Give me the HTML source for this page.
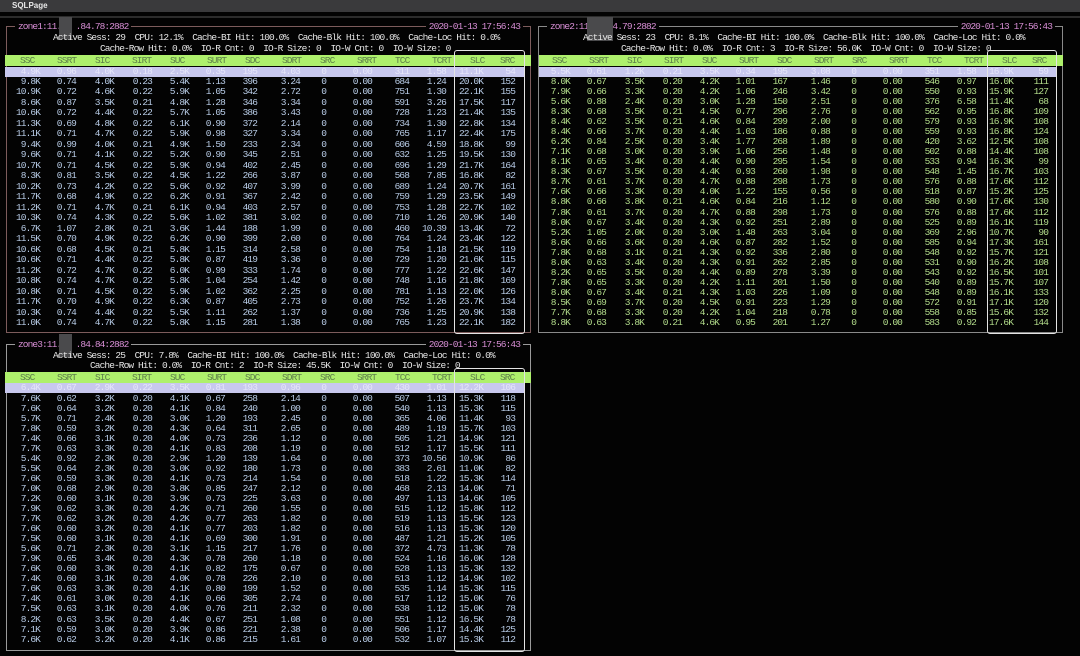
<!DOCTYPE html>
<html><head><meta charset="utf-8">
<style>
*{margin:0;padding:0;box-sizing:border-box}
body{width:1080px;height:656px;background:#030303;position:relative;overflow:hidden;font-family:"Liberation Mono",monospace;font-size:9.5px;letter-spacing:-0.9px}
.top{position:absolute;left:0;top:0;width:1080px;height:12px;background:#3a3a3c}
.top span{position:absolute;left:12px;top:0;font:bold 8px "Liberation Sans",sans-serif;color:#e8e8e8;letter-spacing:0;line-height:12px}
.rule{position:absolute;left:0;top:16px;width:1080px;height:2px;background:#2c2c2c}
.box{position:absolute;border:1px solid #888}
.ttl{position:absolute;top:-6px;background:#030303;color:#d98fd6;line-height:11px;padding:0 3px}
.info{position:absolute;color:#e6e6e6;white-space:pre;line-height:11px}
.green{position:absolute;height:11px;background:#aef06c}
.lav{position:absolute;height:10px;background:#c8c8ee}
.hd{position:absolute;color:#5d7f4a;line-height:11px}
.wb{position:absolute;border:1.5px solid #e4e4e4;border-radius:3px}
.blur{position:absolute;background:#4a4a4c}
table{position:absolute;border-collapse:collapse;table-layout:fixed}
td{text-align:right;padding:0;white-space:nowrap;overflow:visible}
.z1 td{height:10.5px;line-height:10.5px;color:#b9cde8}
.z2 td{height:10.08px;line-height:10.08px;color:#b4de8c}
.z3 td{height:10.04px;line-height:10.04px;color:#b9cde8}
.lt td{color:#e6e6fa;height:10px;line-height:10px}
</style></head><body>
<div class="top"><span>SQLPage</span></div>
<div class="rule"></div>

<!-- ZONE 1 -->
<div class="box" style="left:6px;top:26px;width:525px;height:307px;border-color:#7d5c5c">
<div class="ttl" style="left:8px">zone1:11.&nbsp;&nbsp;&nbsp;.84.78:2882</div>
<div class="ttl" style="right:7px">2020-01-13 17:56:43</div>
</div>
<div class="blur" style="left:59px;top:17px;width:13px;height:22px"></div>
<div class="info" style="left:53px;top:32px">Active Sess: 29  CPU: 12.1%  Cache-BI Hit: 100.0%  Cache-Blk Hit: 100.0%  Cache-Loc Hit: 0.0%</div>
<div class="info" style="left:100px;top:43px">Cache-Row Hit: 0.0%  IO-R Cnt: 0  IO-R Size: 0  IO-W Cnt: 0  IO-W Size: 0</div>
<div class="green" style="left:5px;top:55px;width:526px"></div>
<div class="lav" style="left:5px;top:67px;width:520px"></div>
<div class="hd" style="top:55px;left:20px">SSC</div><div class="hd" style="top:55px;left:57px">SSRT</div><div class="hd" style="top:55px;left:95px">SIC</div><div class="hd" style="top:55px;left:132px">SIRT</div><div class="hd" style="top:55px;left:170px">SUC</div><div class="hd" style="top:55px;left:207px">SURT</div><div class="hd" style="top:55px;left:245px">SDC</div><div class="hd" style="top:55px;left:282px">SDRT</div><div class="hd" style="top:55px;left:320px">SRC</div><div class="hd" style="top:55px;left:357px">SRRT</div><div class="hd" style="top:55px;left:395px">TCC</div><div class="hd" style="top:55px;left:432px">TCRT</div><div class="hd" style="top:55px;left:470px">SLC</div><div class="hd" style="top:55px;left:500px">SRC</div>
<table class="lt" style="left:0;top:67px;width:515px"><colgroup><col style="width:40px"><col style="width:36px"><col style="width:38px"><col style="width:38px"><col style="width:37px"><col style="width:36px"><col style="width:32px"><col style="width:43px"><col style="width:26px"><col style="width:46px"><col style="width:37px"><col style="width:37px"><col style="width:37px"><col style="width:32px"></colgroup>
<tr><td>4.9K</td><td>0.96</td><td>4.0K</td><td>0.18</td><td>2.5K</td><td>0.35</td><td>195</td><td>4.03</td><td>0</td><td>0.00</td><td>311</td><td>1.58</td><td>11.1K</td><td>54</td></tr></table>
<table class="z1" style="left:0;top:76.5px;width:515px"><colgroup><col style="width:40px"><col style="width:36px"><col style="width:38px"><col style="width:38px"><col style="width:37px"><col style="width:36px"><col style="width:32px"><col style="width:43px"><col style="width:26px"><col style="width:46px"><col style="width:37px"><col style="width:37px"><col style="width:37px"><col style="width:32px"></colgroup>
<tr><td>9.8K</td><td>0.74</td><td>4.0K</td><td>0.23</td><td>5.4K</td><td>1.13</td><td>396</td><td>3.24</td><td>0</td><td>0.00</td><td>684</td><td>1.24</td><td>20.0K</td><td>152</td></tr>
<tr><td>10.9K</td><td>0.72</td><td>4.6K</td><td>0.22</td><td>5.9K</td><td>1.05</td><td>342</td><td>2.72</td><td>0</td><td>0.00</td><td>751</td><td>1.30</td><td>22.1K</td><td>155</td></tr>
<tr><td>8.6K</td><td>0.87</td><td>3.5K</td><td>0.21</td><td>4.8K</td><td>1.28</td><td>346</td><td>3.34</td><td>0</td><td>0.00</td><td>591</td><td>3.26</td><td>17.5K</td><td>117</td></tr>
<tr><td>10.6K</td><td>0.72</td><td>4.4K</td><td>0.22</td><td>5.7K</td><td>1.05</td><td>386</td><td>3.43</td><td>0</td><td>0.00</td><td>728</td><td>1.23</td><td>21.4K</td><td>135</td></tr>
<tr><td>11.3K</td><td>0.69</td><td>4.8K</td><td>0.22</td><td>6.1K</td><td>0.90</td><td>372</td><td>2.14</td><td>0</td><td>0.00</td><td>734</td><td>1.30</td><td>22.8K</td><td>134</td></tr>
<tr><td>11.1K</td><td>0.71</td><td>4.7K</td><td>0.22</td><td>5.9K</td><td>0.98</td><td>327</td><td>3.34</td><td>0</td><td>0.00</td><td>765</td><td>1.17</td><td>22.4K</td><td>175</td></tr>
<tr><td>9.4K</td><td>0.99</td><td>4.0K</td><td>0.21</td><td>4.9K</td><td>1.50</td><td>233</td><td>2.34</td><td>0</td><td>0.00</td><td>606</td><td>4.59</td><td>18.8K</td><td>99</td></tr>
<tr><td>9.6K</td><td>0.71</td><td>4.1K</td><td>0.22</td><td>5.2K</td><td>0.90</td><td>345</td><td>2.51</td><td>0</td><td>0.00</td><td>632</td><td>1.25</td><td>19.5K</td><td>130</td></tr>
<tr><td>10.7K</td><td>0.71</td><td>4.5K</td><td>0.22</td><td>5.9K</td><td>0.94</td><td>402</td><td>2.45</td><td>0</td><td>0.00</td><td>696</td><td>1.29</td><td>21.7K</td><td>164</td></tr>
<tr><td>8.3K</td><td>0.81</td><td>3.5K</td><td>0.22</td><td>4.5K</td><td>1.22</td><td>266</td><td>3.87</td><td>0</td><td>0.00</td><td>568</td><td>7.85</td><td>16.8K</td><td>82</td></tr>
<tr><td>10.2K</td><td>0.73</td><td>4.2K</td><td>0.22</td><td>5.6K</td><td>0.92</td><td>407</td><td>3.99</td><td>0</td><td>0.00</td><td>689</td><td>1.24</td><td>20.7K</td><td>161</td></tr>
<tr><td>11.7K</td><td>0.68</td><td>4.9K</td><td>0.22</td><td>6.2K</td><td>0.91</td><td>367</td><td>2.42</td><td>0</td><td>0.00</td><td>759</td><td>1.29</td><td>23.5K</td><td>149</td></tr>
<tr><td>11.2K</td><td>0.71</td><td>4.7K</td><td>0.21</td><td>6.1K</td><td>0.94</td><td>403</td><td>2.57</td><td>0</td><td>0.00</td><td>753</td><td>1.28</td><td>22.7K</td><td>102</td></tr>
<tr><td>10.3K</td><td>0.74</td><td>4.3K</td><td>0.22</td><td>5.6K</td><td>1.02</td><td>381</td><td>3.02</td><td>0</td><td>0.00</td><td>710</td><td>1.26</td><td>20.9K</td><td>140</td></tr>
<tr><td>6.7K</td><td>1.07</td><td>2.8K</td><td>0.21</td><td>3.6K</td><td>1.44</td><td>188</td><td>1.99</td><td>0</td><td>0.00</td><td>460</td><td>10.39</td><td>13.4K</td><td>72</td></tr>
<tr><td>11.5K</td><td>0.70</td><td>4.9K</td><td>0.22</td><td>6.2K</td><td>0.90</td><td>399</td><td>2.60</td><td>0</td><td>0.00</td><td>764</td><td>1.24</td><td>23.4K</td><td>122</td></tr>
<tr><td>10.6K</td><td>0.68</td><td>4.5K</td><td>0.21</td><td>5.8K</td><td>1.15</td><td>314</td><td>2.58</td><td>0</td><td>0.00</td><td>754</td><td>1.18</td><td>21.5K</td><td>119</td></tr>
<tr><td>10.6K</td><td>0.71</td><td>4.4K</td><td>0.22</td><td>5.8K</td><td>0.87</td><td>419</td><td>3.36</td><td>0</td><td>0.00</td><td>729</td><td>1.20</td><td>21.6K</td><td>115</td></tr>
<tr><td>11.2K</td><td>0.72</td><td>4.7K</td><td>0.22</td><td>6.0K</td><td>0.99</td><td>333</td><td>1.74</td><td>0</td><td>0.00</td><td>777</td><td>1.22</td><td>22.6K</td><td>147</td></tr>
<tr><td>10.8K</td><td>0.74</td><td>4.7K</td><td>0.22</td><td>5.8K</td><td>1.04</td><td>254</td><td>1.42</td><td>0</td><td>0.00</td><td>748</td><td>1.16</td><td>21.8K</td><td>169</td></tr>
<tr><td>10.8K</td><td>0.71</td><td>4.5K</td><td>0.22</td><td>5.9K</td><td>1.02</td><td>362</td><td>2.25</td><td>0</td><td>0.00</td><td>781</td><td>1.13</td><td>22.0K</td><td>126</td></tr>
<tr><td>11.7K</td><td>0.70</td><td>4.9K</td><td>0.22</td><td>6.3K</td><td>0.87</td><td>405</td><td>2.73</td><td>0</td><td>0.00</td><td>752</td><td>1.26</td><td>23.7K</td><td>134</td></tr>
<tr><td>10.3K</td><td>0.74</td><td>4.4K</td><td>0.22</td><td>5.5K</td><td>1.11</td><td>262</td><td>1.37</td><td>0</td><td>0.00</td><td>736</td><td>1.25</td><td>20.9K</td><td>138</td></tr>
<tr><td>11.0K</td><td>0.74</td><td>4.7K</td><td>0.22</td><td>5.8K</td><td>1.15</td><td>281</td><td>1.38</td><td>0</td><td>0.00</td><td>765</td><td>1.23</td><td>22.1K</td><td>182</td></tr>
</table>
<div class="wb" style="left:454px;top:50px;width:71px;height:284px"></div>

<!-- ZONE 2 -->
<div class="box" style="left:538px;top:26px;width:525px;height:307px;border-color:#8a8a8a">
<div class="ttl" style="left:8px">zone2:11.&nbsp;&nbsp;&nbsp;&nbsp;4.79:2882</div>
<div class="ttl" style="right:7px">2020-01-13 17:56:43</div>
</div>
<div class="blur" style="left:587px;top:17px;width:26px;height:24px"></div>
<div class="info" style="left:583px;top:32px">Active Sess: 23  CPU: 8.1%  Cache-BI Hit: 100.0%  Cache-Blk Hit: 100.0%  Cache-Loc Hit: 0.0%</div>
<div class="info" style="left:621px;top:43px">Cache-Row Hit: 0.0%  IO-R Cnt: 3  IO-R Size: 56.0K  IO-W Cnt: 0  IO-W Size: 0</div>
<div class="green" style="left:539px;top:55px;width:524px"></div>
<div class="lav" style="left:539px;top:67px;width:517px"></div>
<div class="hd" style="top:55px;left:552px">SSC</div><div class="hd" style="top:55px;left:589px">SSRT</div><div class="hd" style="top:55px;left:627px">SIC</div><div class="hd" style="top:55px;left:664px">SIRT</div><div class="hd" style="top:55px;left:702px">SUC</div><div class="hd" style="top:55px;left:739px">SURT</div><div class="hd" style="top:55px;left:777px">SDC</div><div class="hd" style="top:55px;left:814px">SDRT</div><div class="hd" style="top:55px;left:852px">SRC</div><div class="hd" style="top:55px;left:889px">SRRT</div><div class="hd" style="top:55px;left:927px">TCC</div><div class="hd" style="top:55px;left:964px">TCRT</div><div class="hd" style="top:55px;left:1002px">SLC</div><div class="hd" style="top:55px;left:1032px">SRC</div>
<table class="lt" style="left:530px;top:67px;width:518px"><colgroup><col style="width:40px"><col style="width:36px"><col style="width:38px"><col style="width:38px"><col style="width:37px"><col style="width:36px"><col style="width:32px"><col style="width:43px"><col style="width:26px"><col style="width:46px"><col style="width:37px"><col style="width:37px"><col style="width:37px"><col style="width:35px"></colgroup>
<tr><td>5.5K</td><td>0.61</td><td>1.2K</td><td>0.21</td><td>3.5K</td><td>0.34</td><td>195</td><td>3.08</td><td>0</td><td>0.00</td><td>351</td><td>1.58</td><td>16.9K</td><td>59</td></tr></table>
<table class="z2" style="left:530px;top:76.5px;width:518px"><colgroup><col style="width:40px"><col style="width:36px"><col style="width:38px"><col style="width:38px"><col style="width:37px"><col style="width:36px"><col style="width:32px"><col style="width:43px"><col style="width:26px"><col style="width:46px"><col style="width:37px"><col style="width:37px"><col style="width:37px"><col style="width:35px"></colgroup>
<tr><td>8.0K</td><td>0.67</td><td>3.5K</td><td>0.20</td><td>4.2K</td><td>1.01</td><td>167</td><td>1.46</td><td>0</td><td>0.00</td><td>546</td><td>0.97</td><td>16.0K</td><td>111</td></tr>
<tr><td>7.9K</td><td>0.66</td><td>3.3K</td><td>0.20</td><td>4.2K</td><td>1.06</td><td>246</td><td>3.42</td><td>0</td><td>0.00</td><td>550</td><td>0.93</td><td>15.9K</td><td>127</td></tr>
<tr><td>5.6K</td><td>0.88</td><td>2.4K</td><td>0.20</td><td>3.0K</td><td>1.28</td><td>150</td><td>2.51</td><td>0</td><td>0.00</td><td>376</td><td>6.58</td><td>11.4K</td><td>68</td></tr>
<tr><td>8.3K</td><td>0.68</td><td>3.5K</td><td>0.21</td><td>4.5K</td><td>0.77</td><td>296</td><td>2.76</td><td>0</td><td>0.00</td><td>562</td><td>0.95</td><td>16.8K</td><td>109</td></tr>
<tr><td>8.4K</td><td>0.62</td><td>3.5K</td><td>0.21</td><td>4.6K</td><td>0.84</td><td>299</td><td>2.00</td><td>0</td><td>0.00</td><td>579</td><td>0.93</td><td>16.9K</td><td>108</td></tr>
<tr><td>8.4K</td><td>0.66</td><td>3.7K</td><td>0.20</td><td>4.4K</td><td>1.03</td><td>186</td><td>0.88</td><td>0</td><td>0.00</td><td>559</td><td>0.93</td><td>16.8K</td><td>124</td></tr>
<tr><td>6.2K</td><td>0.84</td><td>2.5K</td><td>0.20</td><td>3.4K</td><td>1.77</td><td>268</td><td>1.89</td><td>0</td><td>0.00</td><td>420</td><td>3.62</td><td>12.5K</td><td>108</td></tr>
<tr><td>7.1K</td><td>0.68</td><td>3.0K</td><td>0.20</td><td>3.9K</td><td>1.06</td><td>256</td><td>1.48</td><td>0</td><td>0.00</td><td>502</td><td>0.88</td><td>14.4K</td><td>108</td></tr>
<tr><td>8.1K</td><td>0.65</td><td>3.4K</td><td>0.20</td><td>4.4K</td><td>0.90</td><td>295</td><td>1.54</td><td>0</td><td>0.00</td><td>533</td><td>0.94</td><td>16.3K</td><td>99</td></tr>
<tr><td>8.3K</td><td>0.67</td><td>3.5K</td><td>0.20</td><td>4.4K</td><td>0.93</td><td>260</td><td>1.98</td><td>0</td><td>0.00</td><td>548</td><td>1.45</td><td>16.7K</td><td>103</td></tr>
<tr><td>8.7K</td><td>0.61</td><td>3.7K</td><td>0.20</td><td>4.7K</td><td>0.88</td><td>298</td><td>1.73</td><td>0</td><td>0.00</td><td>576</td><td>0.88</td><td>17.6K</td><td>112</td></tr>
<tr><td>7.6K</td><td>0.66</td><td>3.3K</td><td>0.20</td><td>4.0K</td><td>1.22</td><td>155</td><td>0.56</td><td>0</td><td>0.00</td><td>518</td><td>0.87</td><td>15.2K</td><td>125</td></tr>
<tr><td>8.8K</td><td>0.66</td><td>3.8K</td><td>0.21</td><td>4.6K</td><td>0.84</td><td>216</td><td>1.12</td><td>0</td><td>0.00</td><td>580</td><td>0.90</td><td>17.6K</td><td>130</td></tr>
<tr><td>7.8K</td><td>0.61</td><td>3.7K</td><td>0.20</td><td>4.7K</td><td>0.88</td><td>298</td><td>1.73</td><td>0</td><td>0.00</td><td>576</td><td>0.88</td><td>17.6K</td><td>112</td></tr>
<tr><td>8.0K</td><td>0.67</td><td>3.4K</td><td>0.20</td><td>4.3K</td><td>0.92</td><td>251</td><td>2.89</td><td>0</td><td>0.00</td><td>525</td><td>0.89</td><td>16.1K</td><td>119</td></tr>
<tr><td>5.2K</td><td>1.05</td><td>2.0K</td><td>0.20</td><td>3.0K</td><td>1.48</td><td>263</td><td>3.04</td><td>0</td><td>0.00</td><td>369</td><td>2.96</td><td>10.7K</td><td>90</td></tr>
<tr><td>8.6K</td><td>0.66</td><td>3.6K</td><td>0.20</td><td>4.6K</td><td>0.87</td><td>282</td><td>1.52</td><td>0</td><td>0.00</td><td>585</td><td>0.94</td><td>17.3K</td><td>161</td></tr>
<tr><td>7.8K</td><td>0.68</td><td>3.1K</td><td>0.21</td><td>4.3K</td><td>0.92</td><td>336</td><td>2.80</td><td>0</td><td>0.00</td><td>548</td><td>0.92</td><td>15.7K</td><td>121</td></tr>
<tr><td>8.0K</td><td>0.63</td><td>3.4K</td><td>0.20</td><td>4.3K</td><td>0.91</td><td>262</td><td>2.85</td><td>0</td><td>0.00</td><td>531</td><td>0.90</td><td>16.2K</td><td>108</td></tr>
<tr><td>8.2K</td><td>0.65</td><td>3.5K</td><td>0.20</td><td>4.4K</td><td>0.89</td><td>278</td><td>3.39</td><td>0</td><td>0.00</td><td>543</td><td>0.92</td><td>16.5K</td><td>101</td></tr>
<tr><td>7.8K</td><td>0.65</td><td>3.3K</td><td>0.20</td><td>4.2K</td><td>1.11</td><td>201</td><td>1.50</td><td>0</td><td>0.00</td><td>540</td><td>0.89</td><td>15.7K</td><td>107</td></tr>
<tr><td>8.0K</td><td>0.67</td><td>3.4K</td><td>0.21</td><td>4.3K</td><td>1.03</td><td>226</td><td>1.09</td><td>0</td><td>0.00</td><td>548</td><td>0.89</td><td>16.1K</td><td>133</td></tr>
<tr><td>8.5K</td><td>0.69</td><td>3.7K</td><td>0.20</td><td>4.5K</td><td>0.91</td><td>223</td><td>1.29</td><td>0</td><td>0.00</td><td>572</td><td>0.91</td><td>17.1K</td><td>120</td></tr>
<tr><td>7.7K</td><td>0.68</td><td>3.3K</td><td>0.20</td><td>4.2K</td><td>1.04</td><td>218</td><td>0.78</td><td>0</td><td>0.00</td><td>558</td><td>0.85</td><td>15.6K</td><td>132</td></tr>
<tr><td>8.8K</td><td>0.63</td><td>3.8K</td><td>0.21</td><td>4.6K</td><td>0.95</td><td>201</td><td>1.27</td><td>0</td><td>0.00</td><td>583</td><td>0.92</td><td>17.6K</td><td>144</td></tr>
</table>
<div class="wb" style="left:987px;top:50px;width:70px;height:284px"></div>

<!-- ZONE 3 -->
<div class="box" style="left:6px;top:344px;width:525px;height:307px;border-color:#9a9a9a">
<div class="ttl" style="left:8px">zone3:11.&nbsp;&nbsp;&nbsp;.84.84:2882</div>
<div class="ttl" style="right:7px">2020-01-13 17:56:43</div>
</div>
<div class="blur" style="left:59px;top:334px;width:13px;height:23px"></div>
<div class="info" style="left:53px;top:350px">Active Sess: 25  CPU: 7.8%  Cache-BI Hit: 100.0%  Cache-Blk Hit: 100.0%  Cache-Loc Hit: 0.0%</div>
<div class="info" style="left:90px;top:360px">Cache-Row Hit: 0.0%  IO-R Cnt: 2  IO-R Size: 45.5K  IO-W Cnt: 0  IO-W Size: 0</div>
<div class="green" style="left:5px;top:372px;width:526px"></div>
<div class="lav" style="left:5px;top:383px;width:520px"></div>
<div class="hd" style="top:372px;left:20px">SSC</div><div class="hd" style="top:372px;left:57px">SSRT</div><div class="hd" style="top:372px;left:95px">SIC</div><div class="hd" style="top:372px;left:132px">SIRT</div><div class="hd" style="top:372px;left:170px">SUC</div><div class="hd" style="top:372px;left:207px">SURT</div><div class="hd" style="top:372px;left:245px">SDC</div><div class="hd" style="top:372px;left:282px">SDRT</div><div class="hd" style="top:372px;left:320px">SRC</div><div class="hd" style="top:372px;left:357px">SRRT</div><div class="hd" style="top:372px;left:395px">TCC</div><div class="hd" style="top:372px;left:432px">TCRT</div><div class="hd" style="top:372px;left:470px">SLC</div><div class="hd" style="top:372px;left:500px">SRC</div>
<table class="lt" style="left:0;top:383px;width:515px"><colgroup><col style="width:40px"><col style="width:36px"><col style="width:38px"><col style="width:38px"><col style="width:37px"><col style="width:36px"><col style="width:32px"><col style="width:43px"><col style="width:26px"><col style="width:46px"><col style="width:37px"><col style="width:37px"><col style="width:37px"><col style="width:32px"></colgroup>
<tr><td>6.4K</td><td>0.67</td><td>2.9K</td><td>0.22</td><td>3.5K</td><td>0.81</td><td>193</td><td>0.96</td><td>0</td><td>0.00</td><td>430</td><td>1.01</td><td>12.2K</td><td>106</td></tr></table>
<table class="z3" style="left:0;top:393.5px;width:515px"><colgroup><col style="width:40px"><col style="width:36px"><col style="width:38px"><col style="width:38px"><col style="width:37px"><col style="width:36px"><col style="width:32px"><col style="width:43px"><col style="width:26px"><col style="width:46px"><col style="width:37px"><col style="width:37px"><col style="width:37px"><col style="width:32px"></colgroup>
<tr><td>7.6K</td><td>0.62</td><td>3.2K</td><td>0.20</td><td>4.1K</td><td>0.67</td><td>258</td><td>2.14</td><td>0</td><td>0.00</td><td>507</td><td>1.13</td><td>15.3K</td><td>118</td></tr>
<tr><td>7.6K</td><td>0.64</td><td>3.2K</td><td>0.20</td><td>4.1K</td><td>0.84</td><td>240</td><td>1.00</td><td>0</td><td>0.00</td><td>540</td><td>1.13</td><td>15.3K</td><td>115</td></tr>
<tr><td>5.7K</td><td>0.71</td><td>2.4K</td><td>0.20</td><td>3.0K</td><td>1.20</td><td>193</td><td>2.45</td><td>0</td><td>0.00</td><td>365</td><td>4.06</td><td>11.4K</td><td>93</td></tr>
<tr><td>7.8K</td><td>0.59</td><td>3.2K</td><td>0.20</td><td>4.3K</td><td>0.64</td><td>311</td><td>2.65</td><td>0</td><td>0.00</td><td>489</td><td>1.19</td><td>15.7K</td><td>103</td></tr>
<tr><td>7.4K</td><td>0.66</td><td>3.1K</td><td>0.20</td><td>4.0K</td><td>0.73</td><td>236</td><td>1.12</td><td>0</td><td>0.00</td><td>505</td><td>1.21</td><td>14.9K</td><td>121</td></tr>
<tr><td>7.7K</td><td>0.63</td><td>3.3K</td><td>0.20</td><td>4.1K</td><td>0.83</td><td>208</td><td>1.19</td><td>0</td><td>0.00</td><td>512</td><td>1.17</td><td>15.5K</td><td>111</td></tr>
<tr><td>5.4K</td><td>0.92</td><td>2.3K</td><td>0.20</td><td>2.9K</td><td>1.20</td><td>139</td><td>1.64</td><td>0</td><td>0.00</td><td>373</td><td>10.56</td><td>10.9K</td><td>86</td></tr>
<tr><td>5.5K</td><td>0.64</td><td>2.3K</td><td>0.20</td><td>3.0K</td><td>0.92</td><td>180</td><td>1.73</td><td>0</td><td>0.00</td><td>383</td><td>2.61</td><td>11.0K</td><td>82</td></tr>
<tr><td>7.6K</td><td>0.59</td><td>3.3K</td><td>0.20</td><td>4.1K</td><td>0.73</td><td>214</td><td>1.54</td><td>0</td><td>0.00</td><td>518</td><td>1.22</td><td>15.3K</td><td>114</td></tr>
<tr><td>7.0K</td><td>0.68</td><td>2.9K</td><td>0.20</td><td>3.8K</td><td>0.85</td><td>247</td><td>2.12</td><td>0</td><td>0.00</td><td>468</td><td>2.13</td><td>14.0K</td><td>71</td></tr>
<tr><td>7.2K</td><td>0.60</td><td>3.1K</td><td>0.20</td><td>3.9K</td><td>0.73</td><td>225</td><td>3.63</td><td>0</td><td>0.00</td><td>497</td><td>1.13</td><td>14.6K</td><td>105</td></tr>
<tr><td>7.9K</td><td>0.62</td><td>3.3K</td><td>0.20</td><td>4.2K</td><td>0.71</td><td>260</td><td>1.55</td><td>0</td><td>0.00</td><td>515</td><td>1.12</td><td>15.8K</td><td>112</td></tr>
<tr><td>7.7K</td><td>0.62</td><td>3.2K</td><td>0.20</td><td>4.2K</td><td>0.77</td><td>263</td><td>1.82</td><td>0</td><td>0.00</td><td>519</td><td>1.13</td><td>15.5K</td><td>123</td></tr>
<tr><td>7.6K</td><td>0.60</td><td>3.2K</td><td>0.20</td><td>4.1K</td><td>0.77</td><td>203</td><td>1.82</td><td>0</td><td>0.00</td><td>516</td><td>1.13</td><td>15.3K</td><td>120</td></tr>
<tr><td>7.5K</td><td>0.60</td><td>3.1K</td><td>0.20</td><td>4.1K</td><td>0.69</td><td>300</td><td>1.91</td><td>0</td><td>0.00</td><td>487</td><td>1.21</td><td>15.2K</td><td>105</td></tr>
<tr><td>5.6K</td><td>0.71</td><td>2.3K</td><td>0.20</td><td>3.1K</td><td>1.15</td><td>217</td><td>1.76</td><td>0</td><td>0.00</td><td>372</td><td>4.73</td><td>11.3K</td><td>78</td></tr>
<tr><td>7.9K</td><td>0.65</td><td>3.4K</td><td>0.20</td><td>4.3K</td><td>0.78</td><td>260</td><td>1.18</td><td>0</td><td>0.00</td><td>524</td><td>1.16</td><td>16.0K</td><td>128</td></tr>
<tr><td>7.6K</td><td>0.60</td><td>3.3K</td><td>0.20</td><td>4.1K</td><td>0.82</td><td>175</td><td>0.67</td><td>0</td><td>0.00</td><td>528</td><td>1.13</td><td>15.3K</td><td>132</td></tr>
<tr><td>7.4K</td><td>0.60</td><td>3.1K</td><td>0.20</td><td>4.0K</td><td>0.78</td><td>226</td><td>2.10</td><td>0</td><td>0.00</td><td>513</td><td>1.12</td><td>14.9K</td><td>102</td></tr>
<tr><td>7.6K</td><td>0.63</td><td>3.3K</td><td>0.20</td><td>4.1K</td><td>0.80</td><td>199</td><td>1.52</td><td>0</td><td>0.00</td><td>535</td><td>1.14</td><td>15.3K</td><td>115</td></tr>
<tr><td>7.4K</td><td>0.61</td><td>3.0K</td><td>0.20</td><td>4.1K</td><td>0.66</td><td>305</td><td>2.74</td><td>0</td><td>0.00</td><td>517</td><td>1.12</td><td>15.0K</td><td>76</td></tr>
<tr><td>7.5K</td><td>0.63</td><td>3.1K</td><td>0.20</td><td>4.0K</td><td>0.76</td><td>211</td><td>2.32</td><td>0</td><td>0.00</td><td>538</td><td>1.12</td><td>15.0K</td><td>78</td></tr>
<tr><td>8.2K</td><td>0.63</td><td>3.5K</td><td>0.20</td><td>4.4K</td><td>0.67</td><td>251</td><td>1.08</td><td>0</td><td>0.00</td><td>551</td><td>1.12</td><td>16.5K</td><td>78</td></tr>
<tr><td>7.1K</td><td>0.59</td><td>3.0K</td><td>0.20</td><td>3.9K</td><td>0.86</td><td>221</td><td>2.38</td><td>0</td><td>0.00</td><td>506</td><td>1.17</td><td>14.4K</td><td>125</td></tr>
<tr><td>7.6K</td><td>0.62</td><td>3.2K</td><td>0.20</td><td>4.1K</td><td>0.86</td><td>215</td><td>1.61</td><td>0</td><td>0.00</td><td>532</td><td>1.07</td><td>15.3K</td><td>112</td></tr>
</table>
<div class="wb" style="left:454px;top:368px;width:71px;height:284px"></div>
</body></html>
